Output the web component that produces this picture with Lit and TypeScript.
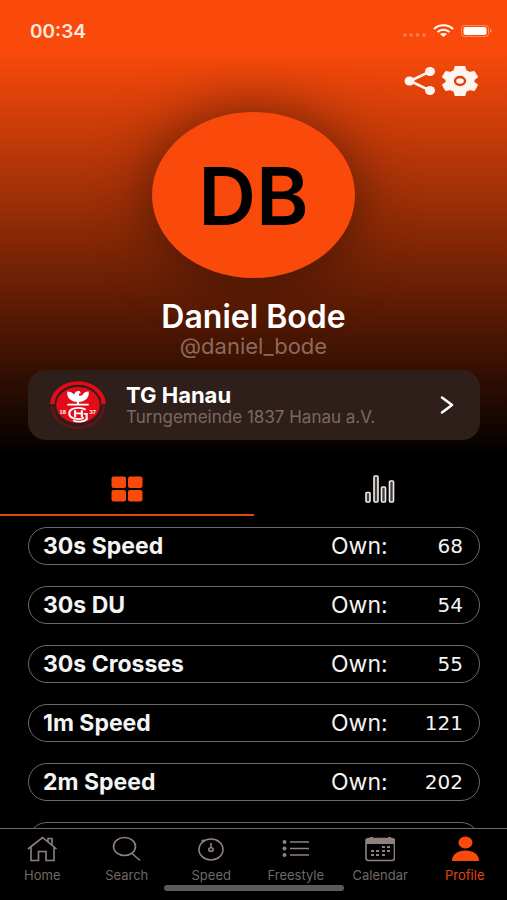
import { LitElement, html, css, svg, nothing } from "lit";
import { customElement, property } from "lit/decorators.js";
import { classMap } from "lit/directives/class-map.js";

interface Result {
  name: string;
  own: number;
}

const results: Result[] = [
  { name: "30s Speed", own: 68 },
  { name: "30s DU", own: 54 },
  { name: "30s Crosses", own: 55 },
  { name: "1m Speed", own: 121 },
  { name: "2m Speed", own: 202 },
];

const days = [
  [18, 11], [23, 11],
  [7, 15], [12, 15], [18, 15], [23, 15],
  [7, 19], [12, 19], [18, 19],
];

const tabIcons: Record<string, unknown> = {
  Home: svg`<path d="M1 13 L15.500 1.500 L29.500 13 M4 11 V24.500 H11.500 V15.500 H19 V24.500 H27 V11 M21 5.500 V2.500 H25 V9" />`,
  Search: svg`<ellipse cx="12.500" cy="10.500" rx="11" ry="9" /><path d="M20 17.500 L28 24.500" />`,
  Speed: svg`<ellipse cx="15" cy="13.500" rx="12" ry="10.500" /><path d="M15 7 V12 M5.500 5 L8 4" /><ellipse cx="15" cy="13.500" rx="2.200" ry="1.800" />`,
  Freestyle: svg`<path d="M9 6 H28 M9 12.500 H28 M9 19 H28" />
    <g class="solid"><circle cx="3.500" cy="6" r="2" /><circle cx="3.500" cy="12.500" r="2" /><circle cx="3.500" cy="19" r="2" /></g>`,
  Calendar: svg`<rect x="1" y="2.500" width="28.500" height="22" rx="2.500" />
    <g class="solid"><path d="M1 4 Q1 2.500 3 2.500 H27.500 Q29.500 2.500 29.500 4 V8 H1 Z" /><path d="M5 1 H8 V3 H5 Z M23 1 H26 V3 H23 Z" />
    ${days.map(([x, y]) => svg`<rect x=${x - 1} y=${y - 1} width="3" height="2" />`)}</g>`,
  Profile: svg`<g class="solid"><ellipse cx="15.500" cy="6.500" rx="7" ry="6" /><path d="M2 25 C2 18 8 14.500 15.500 14.500 S29 18 29 25 Z" /></g>`,
};

@customElement("club-logo")
export class ClubLogo extends LitElement {
  static styles = css`
    :host { display: block; flex: none; }
    svg { display: block; width: 58px; height: 48px; font-family: "Liberation Sans", Arial, sans-serif; }
    .red { fill: #e30b17; }
    .ring { fill: none; stroke: #e30b17; stroke-width: 4.5; }
    .motto { fill: none; stroke: #7a1217; stroke-width: 3; stroke-dasharray: 2 1; }
    .white { fill: #fff; }
    .line { fill: none; stroke: #fff; stroke-width: 2.2; }
    .year { fill: #fff; font-size: 6px; font-weight: 700; }
  `;
  render() {
    return html`<svg viewBox="0 0 60 60" preserveAspectRatio="none" role="img" aria-label="TG Hanau">
      <path class="ring" d="M3.500 29 A26.500 26.500 0 0 1 56.500 29" />
      <path class="motto" d="M3.500 32 A26.500 26.500 0 0 0 56.500 32" />
      <circle class="red" cx="30" cy="30" r="22.500" />
      <path class="white" d="M19 13 C22 13 24 14 26 17 C27 13 30 12 32 13 L33 15.500 L31 15.500 L31 18 C33 19 34 18 35 17 C36 14 38 13 41 13 C42 19 39 24 33 26 H27 C21 24 18 19 19 13 Z" />
      <path class="line" d="M19 29.500 H41 M30 25 V30 M38 36 C33 32 21 33 21 40.500 C21 48 33 49 36 45.500 M27 36.500 V45 M34 36.500 V45 M27 40.500 H34" />
      <path class="line" d="M25 49 C29 52 36 51 39 48 V41 H36" />
      <text class="year" x="11" y="41">18</text>
      <text class="year" x="42" y="41">37</text>
    </svg>`;
  }
}

@customElement("result-row")
export class ResultRow extends LitElement {
  @property({ attribute: false }) result?: Result;
  static styles = css`
    :host { display: block; }
    .row {
      box-sizing: border-box;
      height: 38px;
      border: 1px solid #6a6a6a;
      border-radius: 19px;
      padding: 0 16px 0 14px;
      display: grid;
      grid-template-columns: 1fr 56px 76px;
      align-items: center;
      color: #f4f4f4;
    }
    .name { font-size: 23px; font-weight: 700; line-height: 28px; }
    .own { font-size: 23px; line-height: 28px; }
    .value { font-family: "DejaVu Sans", sans-serif; font-size: 20px; line-height: 28px; text-align: right; }
  `;
  render() {
    return html`<div class="row">
      ${this.result
        ? html`<span class="name">${this.result.name}</span>
            <span class="own">Own:</span>
            <span class="value">${this.result.own}</span>`
        : nothing}
    </div>`;
  }
}

@customElement("app-root")
export class AppRoot extends LitElement {
  static styles = css`
    :host {
      display: flex;
      flex-direction: column;
      height: 100vh;
      overflow: hidden;
      position: relative;
      background: linear-gradient(#fa4a0b 0, #fa4a0b 50px, #000 456px);
      color: #fff;
      font-family: Inter, "Liberation Sans", sans-serif;
    }
    svg { display: block; }
    button, a { font: inherit; color: inherit; text-decoration: none; }
    button { border: 0; padding: 0; background: none; }
    .status {
      flex: none;
      height: 62px;
      padding: 0 15px 0 30px;
      display: flex;
      align-items: center;
      justify-content: space-between;
      font-size: 19px;
      font-weight: 600;
      color: #ffe9dc;
    }
    .page { flex: 1; min-height: 0; overflow: hidden; }
    .actions { display: flex; justify-content: flex-end; gap: 5px; height: 50px; padding: 3px 28px 0 0; box-sizing: border-box; }
    .actions button { height: 32px; }
    .avatar {
      width: 40%;
      height: 166px;
      margin: 0 auto;
      border-radius: 50%;
      background: #fa4a0b;
      box-shadow: 0 0 60px rgba(0, 0, 0, 0.5);
      display: grid;
      place-items: center;
      color: #000;
      font-size: 80px;
      font-weight: 600;
    }
    .name { margin: 21px 0 0; font-size: 32px; line-height: 36px; font-weight: 600; text-align: center; }
    .handle { margin: 0; font-size: 22px; line-height: 23px; text-align: center; color: #8c6a5b; }
    .club {
      margin: 12px 27px 0 28px;
      height: 70px;
      box-sizing: border-box;
      padding: 0 26px 0 21px;
      border-radius: 18px;
      background: #2f1f1a;
      display: flex;
      align-items: center;
      gap: 19px;
    }
    .club-text { flex: 1; min-width: 0; }
    .club-name { font-size: 22px; line-height: 24px; font-weight: 700; }
    .club-full { font-size: 17px; line-height: 20px; color: #7b6961; white-space: nowrap; }
    .views { display: grid; grid-template-columns: 1fr 1fr; height: 76px; }
    .view { display: grid; place-items: center; padding-top: 24px; border-bottom: 2px solid transparent; }
    .view.on { border-color: #e2460f; }
    .list { list-style: none; margin: 0; padding: 11px 27px 0 28px; display: grid; gap: 21px; }
    .tabs {
      flex: none;
      height: 72px;
      box-sizing: border-box;
      border-top: 1px solid #6a6a6a;
      background: #000;
      display: grid;
      grid-template-columns: repeat(6, 1fr);
    }
    .tab {
      display: flex;
      flex-direction: column;
      align-items: center;
      gap: 5px;
      padding-top: 7px;
      font-size: 13px;
      line-height: 16px;
      color: #6f6865;
    }
    .tab svg { fill: none; stroke: #8f817d; stroke-width: 1.6; }
    .tab .solid { fill: #8f817d; stroke: none; }
    .tab.on { color: #e2460f; }
    .tab.on .solid { fill: #fa4a0b; }
    .indicator {
      position: absolute;
      bottom: 9px;
      left: 50%;
      width: 180px;
      height: 6px;
      margin-left: -90px;
      border-radius: 3px;
      background: #5b5b5b;
    }
  `;

  render() {
    return html`
      <div class="status">
        <span>00:34</span>
        <svg width="90" height="16" viewBox="0 0 90 16" fill="#fff" aria-hidden="true">
          <g opacity="0.3">
            <circle cx="3" cy="12" r="1.800" /><circle cx="9" cy="12" r="1.800" /><circle cx="15.500" cy="12" r="1.800" /><circle cx="22" cy="12" r="1.800" />
          </g>
          <g fill="none" stroke="#fff" stroke-width="2.200">
            <path d="M32 6 C37 1 46 1 51 6" /><path d="M35.500 9 C39 6 44 6 47.500 9" />
          </g>
          <path d="M38 11 C40 9.500 43 9.500 45 11 L41.500 14 Z" />
          <rect x="59.500" y="2.500" width="27" height="11" rx="3" fill="none" stroke="#fff" stroke-opacity="0.35" />
          <rect x="61.500" y="4" width="23" height="8" rx="2" />
          <path d="M88 6 Q91 8 88 10 Z" opacity="0.5" />
        </svg>
      </div>

      <main class="page">
        <div class="actions">
          <button aria-label="Share">
            <svg width="32" height="32" viewBox="0 0 32 32" fill="#fff5ef">
              <path d="M26 6.500 L6 16 L26 25.500" fill="none" stroke="#fff5ef" stroke-width="2.500" />
              <ellipse cx="5.500" cy="16" rx="5" ry="4.500" /><ellipse cx="26" cy="6.500" rx="5" ry="4.500" /><ellipse cx="26" cy="25.500" rx="5" ry="4.500" />
            </svg>
          </button>
          <button aria-label="Settings">
            <svg width="38" height="32" viewBox="0 0 38 32">
              <path
                fill="#fff5ef"
                stroke="#fff5ef"
                stroke-width="2"
                stroke-linejoin="round"
                d="M14.500 2 H23.500 L24.500 6 L28.500 8 L33 7 L36 12 L32.500 14.500 V17.500 L36 20 L33 25 L28.500 24 L24.500 26 L23.500 30 H14.500 L13.500 26 L9.500 24 L5 25 L2 20 L5.500 17.500 V14.500 L2 12 L5 7 L9.500 8 L13.500 6 Z"
              />
              <ellipse cx="19" cy="16" rx="5" ry="4" fill="none" stroke="#d9430c" stroke-width="2.400" />
            </svg>
          </button>
        </div>
        <div class="avatar">DB</div>
        <h1 class="name">Daniel Bode</h1>
        <p class="handle">@daniel_bode</p>

        <a class="club" href="#club">
          <club-logo></club-logo>
          <div class="club-text">
            <div class="club-name">TG Hanau</div>
            <div class="club-full">Turngemeinde 1837 Hanau a.V.</div>
          </div>
          <svg width="14" height="20" viewBox="0 0 14 20" fill="none" stroke="#fff" stroke-width="2.600" stroke-linecap="round" stroke-linejoin="round" aria-hidden="true">
            <path d="M2 2.500 L12 10 L2 17.500" />
          </svg>
        </a>

        <nav class="views">
          <button class="view on" aria-label="Overview">
            <svg width="32" height="26" viewBox="0 0 32 26" fill="#fa4a0b">
              <rect x="0.500" y="0.500" width="14.500" height="11.500" rx="2" /><rect x="17" y="0.500" width="14.500" height="11.500" rx="2" />
              <rect x="0.500" y="14" width="14.500" height="11.500" rx="2" /><rect x="17" y="14" width="14.500" height="11.500" rx="2" />
            </svg>
          </button>
          <button class="view" aria-label="Statistics">
            <svg width="30" height="28" viewBox="0 0 30 28" fill="#443f3d" stroke="#f2eeec" stroke-width="1.600">
              <rect x="1" y="17.500" width="4" height="9.500" rx="1" /><rect x="9" y="1" width="4" height="26" rx="1" />
              <rect x="16.500" y="12" width="4" height="15" rx="1" /><rect x="24.500" y="6" width="4" height="21" rx="1" />
            </svg>
          </button>
        </nav>

        <ul class="list">
          ${results.map((r) => html`<li><result-row .result=${r}></result-row></li>`)}
          <li aria-hidden="true"><result-row></result-row></li>
        </ul>
      </main>

      <nav class="tabs">
        ${Object.entries(tabIcons).map(
          ([label, icon]) => html`<a href="#${label.toLowerCase()}" class=${classMap({ tab: true, on: label === "Profile" })}>
            <svg width="30" height="26" viewBox="0 0 30 26" aria-hidden="true">${icon}</svg>
            <span>${label}</span>
          </a>`
        )}
      </nav>
      <div class="indicator"></div>
    `;
  }
}
